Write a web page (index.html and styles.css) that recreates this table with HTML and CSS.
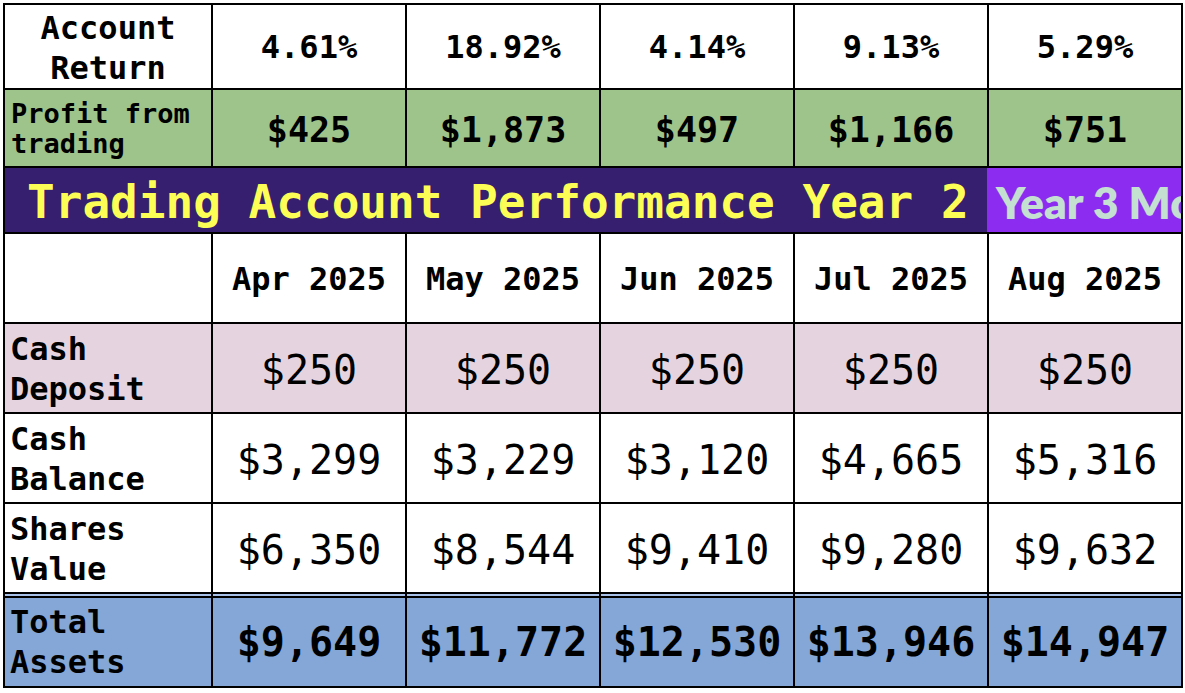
FILE: index.html
```html
<!DOCTYPE html>
<html>
<head>
<meta charset="utf-8">
<link rel="stylesheet" href="styles.css">
</head>
<body>
<div class="sheet">
  <div class="cell c-head">Account<br>Return</div>
  <div class="cell c-pct">4.61%</div>
  <div class="cell c-pct">18.92%</div>
  <div class="cell c-pct">4.14%</div>
  <div class="cell c-pct">9.13%</div>
  <div class="cell c-pct">5.29%</div>

  <div class="cell green c-small">Profit from<br>trading</div>
  <div class="cell green c-profit">$425</div>
  <div class="cell green c-profit">$1,873</div>
  <div class="cell green c-profit">$497</div>
  <div class="cell green c-profit">$1,166</div>
  <div class="cell green c-profit">$751</div>

  <div class="title-row">
    <div class="title-main">Trading Account Performance Year 2</div>
    <div class="title-next">Year 3 Monthly Performance</div>
  </div>

  <div class="cell"></div>
  <div class="cell c-month">Apr 2025</div>
  <div class="cell c-month">May 2025</div>
  <div class="cell c-month">Jun 2025</div>
  <div class="cell c-month">Jul 2025</div>
  <div class="cell c-month">Aug 2025</div>

  <div class="cell pink c-label">Cash<br>Deposit</div>
  <div class="cell pink c-val">$250</div>
  <div class="cell pink c-val">$250</div>
  <div class="cell pink c-val">$250</div>
  <div class="cell pink c-val">$250</div>
  <div class="cell pink c-val">$250</div>

  <div class="cell c-label">Cash<br>Balance</div>
  <div class="cell c-val">$3,299</div>
  <div class="cell c-val">$3,229</div>
  <div class="cell c-val">$3,120</div>
  <div class="cell c-val">$4,665</div>
  <div class="cell c-val">$5,316</div>

  <div class="cell c-label">Shares<br>Value</div>
  <div class="cell c-val">$6,350</div>
  <div class="cell c-val">$8,544</div>
  <div class="cell c-val">$9,410</div>
  <div class="cell c-val">$9,280</div>
  <div class="cell c-val">$9,632</div>

  <div class="cell blue total c-label">Total<br>Assets</div>
  <div class="cell blue total c-total">$9,649</div>
  <div class="cell blue total c-total">$11,772</div>
  <div class="cell blue total c-total">$12,530</div>
  <div class="cell blue total c-total">$13,946</div>
  <div class="cell blue total c-total">$14,947</div>
</div>
</body>
</html>
```

FILE: styles.css
```css
html, body {
  margin: 0;
  padding: 0;
  background: #ffffff;
}
body {
  width: 1185px;
  height: 693px;
  overflow: hidden;
  font-family: "DejaVu Sans Mono", "Liberation Mono", monospace;
  color: #000;
}
.sheet {
  margin: 3px 0 0 3px;
  width: 1176px;
  padding: 2px;
  background: #000;
  display: grid;
  grid-template-columns: 206px repeat(5, 192px);
  grid-template-rows: 83px 76px 64px 88px 88px 88px 88px 92px;
  column-gap: 2px;
  row-gap: 2px;
}
.cell {
  background: #fff;
  display: flex;
  align-items: center;
  justify-content: center;
  text-align: center;
  white-space: nowrap;
  overflow: hidden;
}
.green { background: #9fc48b; }
.pink { background: #e5d4df; }
.blue { background: #84a7d7; }
.total {
  border-top: 2px solid #a7c1e8;
  box-shadow: inset 0 2px 0 #000;
  padding-top: 2px;
}
.c-head {
  font-weight: bold;
  font-size: 32px;
  line-height: 40px;
  padding-top: 2px;
}
.c-pct {
  font-weight: bold;
  font-size: 32px;
}
.c-small {
  justify-content: flex-start;
  text-align: left;
  font-weight: bold;
  font-size: 27px;
  line-height: 30px;
  padding-left: 6px;
  padding-top: 2px;
}
.c-profit {
  font-weight: bold;
  font-size: 35px;
  padding-top: 3px;
}
.title-row {
  grid-column: 1 / -1;
  display: flex;
  overflow: hidden;
  white-space: nowrap;
}
.title-main {
  width: 982px;
  flex: none;
  background: #351f6e;
  color: #fdfe55;
  font-weight: bold;
  font-size: 46px;
  line-height: 64px;
  padding-left: 22px;
  padding-top: 2px;
  box-sizing: border-box;
  overflow: hidden;
}
.title-next {
  flex: 1;
  background: #8d2cf1;
  color: #c3e0d0;
  font-family: "Lato", "Open Sans", sans-serif;
  font-weight: 800;
  font-size: 44px;
  line-height: 64px;
  padding-left: 9px;
  padding-top: 2px;
  overflow: hidden;
}
.c-month {
  font-weight: bold;
  font-size: 32px;
  padding-top: 2px;
}
.c-label {
  justify-content: flex-start;
  text-align: left;
  font-weight: bold;
  font-size: 32px;
  line-height: 40px;
  padding-left: 5px;
  padding-top: 2px;
}
.c-val {
  font-size: 40px;
  padding-top: 3px;
}
.c-total {
  font-weight: bold;
  font-size: 40px;
}
```
